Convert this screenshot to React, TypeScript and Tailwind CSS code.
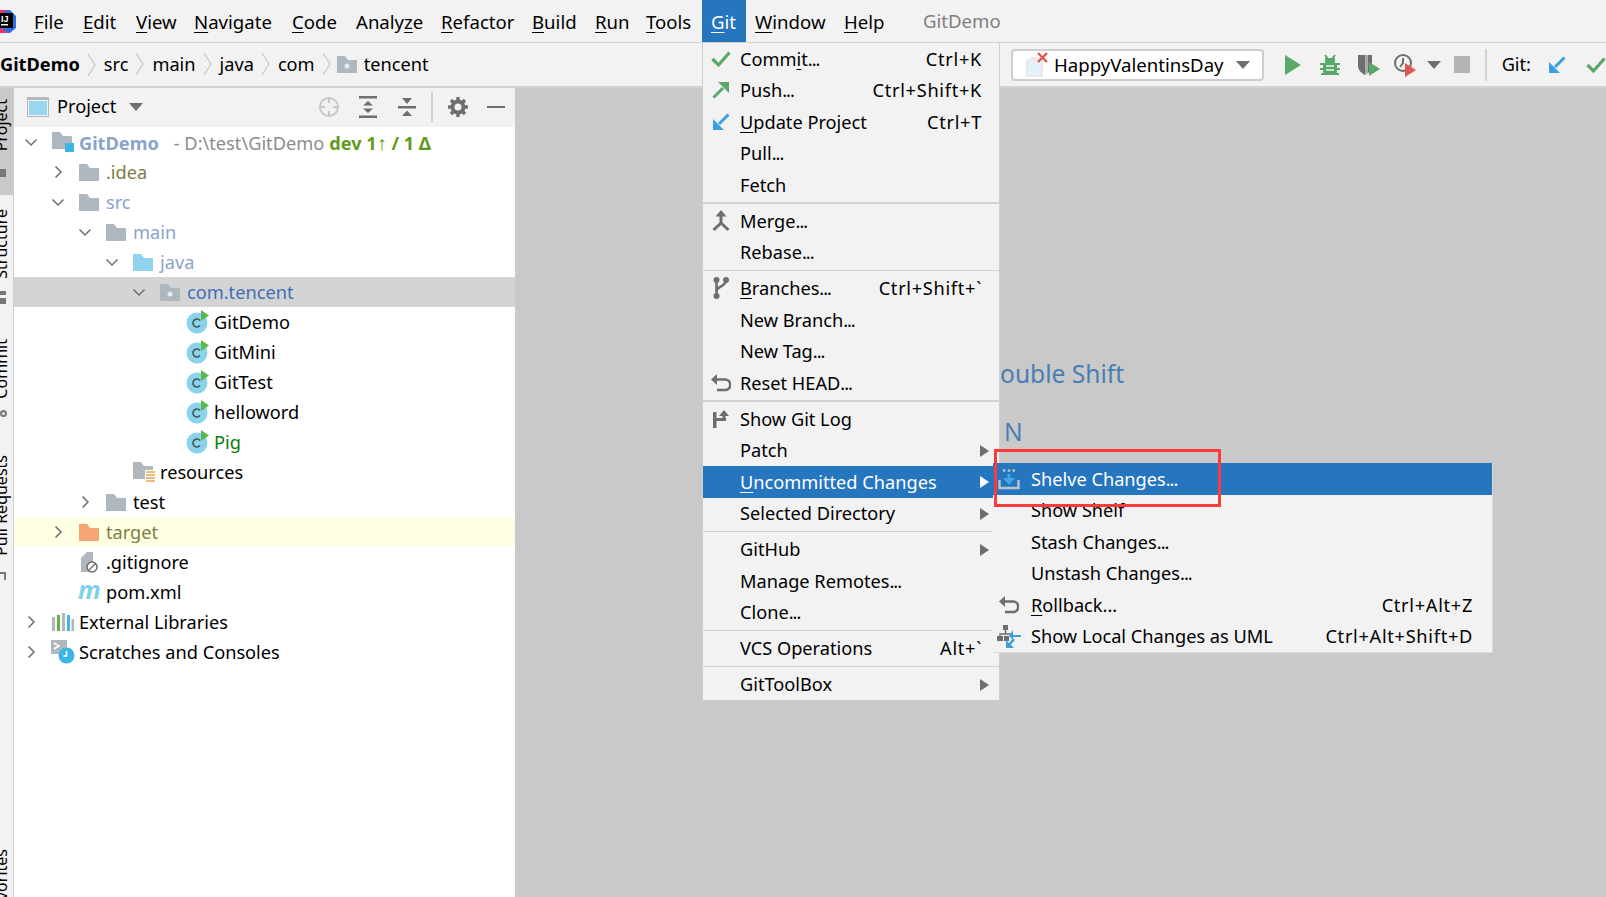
import type { ReactNode } from "react";

const U = ({ children }: { children: ReactNode }) => (
  <span className="underline decoration-[1px] underline-offset-[3px]">{children}</span>
);

const Dots = () => <span className="tracking-[-1px]">...</span>;

const Chevron = ({ open }: { open?: boolean }) => (
  <svg width="14" height="14" viewBox="0 0 14 14" fill="none" stroke="#6e6e6e" strokeWidth="1.5">
    {open ? <polyline points="1.5,4.5 7,10 12.5,4.5" /> : <polyline points="4.5,1.5 10,7 4.5,12.5" />}
  </svg>
);

const Folder = ({ color = "#afb8bf", dot }: { color?: string; dot?: boolean }) => (
  <svg width="22" height="20" viewBox="0 0 22 20">
    <path d="M1 2h8l3 4h9v13H1z" fill={color} />
    {dot && <circle cx="11" cy="12" r="2.5" fill="#e8eaec" />}
  </svg>
);

const ClassIcon = () => (
  <svg width="24" height="24" viewBox="0 0 24 24">
    <circle cx="11" cy="13" r="10.5" fill="#89d3ec" />
    <path d="M14 10.4a4 4 0 1 0 0 5.2" fill="none" stroke="#4a5357" strokeWidth="1.6" />
    <polygon points="15,0 23,5.5 15,11" fill="#59b84a" />
  </svg>
);

const ModuleIcon = () => (
  <svg width="24" height="22" viewBox="0 0 24 22">
    <path d="M1 1h8l3 4h9v13H1z" fill="#afb8bf" />
    <rect x="14" y="12" width="9" height="9" fill="#3fb5e5" />
  </svg>
);

const ResourcesIcon = () => (
  <svg width="24" height="22" viewBox="0 0 24 22">
    <path d="M1 1h8l3 4h9v13H1z" fill="#afb8bf" />
    <rect x="13" y="9" width="10" height="12" fill="#fff" />
    <path d="M14 11h9M14 14h9M14 17h9M14 20h9" stroke="#e2a850" strokeWidth="1.6" />
  </svg>
);

const IgnoreIcon = () => (
  <svg width="22" height="24" viewBox="0 0 22 24">
    <path d="M3 8l6-6h6v20H3z" fill="#afb8bf" />
    <circle cx="14" cy="17" r="5" fill="#fff" stroke="#6e6e6e" strokeWidth="1.5" />
    <path d="M10.5 20.5l7-7" stroke="#6e6e6e" strokeWidth="1.5" />
  </svg>
);

const PomIcon = () => (
  <svg width="24" height="20" viewBox="0 0 24 20">
    <text x="0" y="17" fontFamily="Noto Sans, sans-serif" fontWeight="700" fontStyle="italic" fontSize="25" fill="#7fd0ee">
      m
    </text>
  </svg>
);

const LibrariesIcon = () => (
  <svg width="24" height="20" viewBox="0 0 24 20">
    <rect x="1" y="5" width="3" height="14" fill="#afb8bf" />
    <rect x="6" y="3" width="3" height="16" fill="#62b543" />
    <rect x="11" y="1" width="3" height="18" fill="#afb8bf" />
    <rect x="16" y="3" width="3" height="16" fill="#40b6e0" />
    <rect x="20.5" y="7" width="2.5" height="12" fill="#afb8bf" />
  </svg>
);

const ScratchIcon = () => (
  <svg width="24" height="24" viewBox="0 0 24 24">
    <rect x="0" y="0" width="16" height="14" fill="#afb8bf" />
    <polyline points="3,3 8,6 3,9" fill="none" stroke="#fff" strokeWidth="1.5" />
    <circle cx="15.5" cy="15.5" r="8" fill="#3fb5e5" />
    <path d="M15.5 11v5h-3" fill="none" stroke="#fff" strokeWidth="1.6" />
  </svg>
);

const ProjectIcon = () => (
  <svg width="22" height="20" viewBox="0 0 22 20">
    <rect x="0.5" y="0.5" width="21" height="19" fill="#f2f2f2" stroke="#b4b9bd" />
    <rect x="2" y="4" width="18" height="14" fill="#97d8f0" />
    <rect x="0" y="0" width="22" height="3" fill="#b4b9bd" />
  </svg>
);

const Caret = ({ color = "#6e6e6e" }: { color?: string }) => (
  <svg width="14" height="8" viewBox="0 0 14 8">
    <polygon points="0,0 14,0 7,8" fill={color} />
  </svg>
);

const Tri = ({ white }: { white?: boolean }) => (
  <svg width="9" height="12" viewBox="0 0 9 12">
    <polygon points="0,0 9,6 0,12" fill={white ? "#fff" : "#6e6e6e"} />
  </svg>
);

const Check = () => (
  <svg width="20" height="18" viewBox="0 0 20 18" fill="none" stroke="#59a869" strokeWidth="3.2">
    <polyline points="1.5,9 7.5,15 18.5,2.5" />
  </svg>
);
const PushArrow = () => (
  <svg width="18" height="18" viewBox="0 0 18 18">
    <path d="M1.5 16.5L11 7" stroke="#59a869" strokeWidth="3" />
    <polygon points="6,1 17,1 17,12" fill="#59a869" />
  </svg>
);
const UpdateArrow = ({ size = 18 }: { size?: number }) => (
  <svg width={size} height={size} viewBox="0 0 18 18">
    <path d="M16.5 1.5L7 11" stroke="#3d9fdf" strokeWidth="3" />
    <polygon points="1,6 1,17 12,17" fill="#3d9fdf" />
  </svg>
);
const Merge = () => (
  <svg width="18" height="22" viewBox="0 0 18 22">
    <polygon points="9,0 14.5,6.5 3.5,6.5" fill="#6e6e6e" />
    <path d="M9 5v8L1.5 20M9 13l7.5 7" fill="none" stroke="#6e6e6e" strokeWidth="3" />
  </svg>
);
const Branch = () => (
  <svg width="16" height="22" viewBox="0 0 16 22" fill="#6e6e6e">
    <path d="M3.5 3v16M13 3c0 7-9.5 6-9.5 11" fill="none" stroke="#6e6e6e" strokeWidth="2.6" />
    <circle cx="3.5" cy="3" r="3" />
    <circle cx="3.5" cy="19" r="3" />
    <circle cx="13" cy="3" r="3" />
  </svg>
);
const Undo = () => (
  <svg width="20" height="18" viewBox="0 0 20 18">
    <path d="M5 5.5h9a5 5 0 0 1 0 10.5H6" fill="none" stroke="#6e6e6e" strokeWidth="2.6" />
    <polygon points="6,0 0,5.5 6,11" fill="#6e6e6e" />
  </svg>
);
const GitLog = () => (
  <svg width="16" height="18" viewBox="0 0 16 18" fill="#6e6e6e">
    <rect x="0" y="2" width="3.5" height="16" />
    <rect x="3" y="8" width="10" height="3" />
    <polygon points="11,0 16,6 6,6" />
    <rect x="9.5" y="5" width="3" height="4" />
  </svg>
);
const Shelve = () => (
  <svg width="22" height="22" viewBox="0 0 22 22">
    <path d="M1.5 12v8h19v-8" fill="none" stroke="#b8c4cc" strokeWidth="2.4" />
    <path d="M11 6v7" stroke="#3fa7e5" strokeWidth="3" />
    <polygon points="5,10 17,10 11,17" fill="#3fa7e5" />
    <path d="M5 2.5h12" stroke="#b8c4cc" strokeWidth="2.4" strokeDasharray="2.4 2.4" />
  </svg>
);
const Uml = () => (
  <svg width="24" height="24" viewBox="0 0 24 24">
    <rect x="6" y="1" width="5" height="5" fill="#6e6e6e" />
    <path d="M8.5 6v4M3 12v-2h11v2" fill="none" stroke="#6e6e6e" strokeWidth="1.5" />
    <rect x="0" y="12" width="6" height="5" fill="#6e6e6e" />
    <rect x="7" y="12" width="5" height="5" fill="#6e6e6e" />
    <polygon points="24,11 16,11 16,6 12,12 16,16 16,13 24,13" fill="#3d9fdf" />
    <path d="M17 15l-5 6" stroke="#3d9fdf" strokeWidth="2.6" />
    <polygon points="9,16 9,24 17,24" fill="#3d9fdf" />
  </svg>
);

const Logo = () => (
  <svg width="16" height="26" viewBox="0 0 16 26">
    <path d="M0 3h10l6 6v12l-6 5H0z" fill="#2f6fe0" />
    <path d="M0 3h6l-6 8z" fill="#f0336e" />
    <path d="M0 20l8 6H0z" fill="#f0336e" />
    <rect x="0" y="6" width="13" height="15" fill="#000" />
    <text x="1" y="15" fontFamily="Liberation Sans, sans-serif" fontWeight="700" fontSize="9" fill="#fff">
      IJ
    </text>
    <rect x="1" y="17" width="7" height="1.5" fill="#fff" />
  </svg>
);

const Locate = () => (
  <svg width="22" height="22" viewBox="0 0 22 22" fill="none" stroke="#c8c8c8" strokeWidth="2">
    <circle cx="11" cy="11" r="9" />
    <path d="M11 2v5M11 15v5M2 11h5M15 11h5" />
  </svg>
);
const ExpandAll = () => (
  <svg width="20" height="22" viewBox="0 0 20 22" fill="#6e6e6e">
    <rect x="1" y="0" width="18" height="2.5" />
    <rect x="1" y="19.5" width="18" height="2.5" />
    <polygon points="10,5 15,9.5 5,9.5" />
    <polygon points="10,17 15,12.5 5,12.5" />
  </svg>
);
const CollapseAll = () => (
  <svg width="20" height="22" viewBox="0 0 20 22" fill="#6e6e6e">
    <rect x="1" y="10" width="18" height="2.5" />
    <polygon points="10,8 15,2 5,2" />
    <polygon points="10,14.5 15,20 5,20" />
  </svg>
);
const Gear = () => (
  <svg width="20" height="20" viewBox="0 0 20 20">
    <circle cx="10" cy="10" r="5.5" fill="none" stroke="#6e6e6e" strokeWidth="4" />
    <path d="M10 0v4M10 16v4M0 10h4M16 10h4M3 3l3 3M14 14l3 3M17 3l-3 3M6 14l-3 3" stroke="#6e6e6e" strokeWidth="3.4" />
  </svg>
);

const ComboIcon = () => (
  <svg width="24" height="26" viewBox="0 0 24 26">
    <rect x="1" y="8" width="15" height="16" fill="#e4f2f9" stroke="#e3e3e3" strokeWidth="1.5" />
    <rect x="4" y="5" width="15" height="5" fill="#ececec" />
    <path d="M12 1l9 9M21 1l-9 9" stroke="#e05555" strokeWidth="2.4" />
  </svg>
);
const Play = () => (
  <svg width="16" height="20" viewBox="0 0 16 20">
    <polygon points="0,0 16,10 0,20" fill="#59a869" />
  </svg>
);
const Bug = () => (
  <svg width="20" height="22" viewBox="0 0 20 22" fill="#59a869">
    <path d="M5 1l3 4M15 1l-3 4" stroke="#59a869" strokeWidth="2" />
    <rect x="5" y="4" width="10" height="4" />
    <rect x="3" y="8" width="14" height="13" rx="4" />
    <path d="M0 10h20M0 15h20M1 20h18" stroke="#59a869" strokeWidth="1.8" />
    <path d="M6 12h8M6 16h8" stroke="#f2f2f2" strokeWidth="1.6" />
  </svg>
);
const Coverage = () => (
  <svg width="24" height="24" viewBox="0 0 24 24">
    <path d="M1 2h14v10c0 5-3 8-7 10C4 20 1 17 1 12z" fill="#6e6e6e" />
    <path d="M8 2h3v20l-3 0z" fill="#f2f2f2" opacity="0.45" />
    <polygon points="12,9 23,16 12,23" fill="#59a869" />
  </svg>
);
const Profiler = () => (
  <svg width="24" height="24" viewBox="0 0 24 24">
    <circle cx="10" cy="10" r="8" fill="none" stroke="#6e6e6e" strokeWidth="2" />
    <path d="M10 5v5l-3 4" fill="none" stroke="#6e6e6e" strokeWidth="2" />
    <polygon points="12,10 23,17 12,24" fill="#e05555" />
  </svg>
);

const menuBar = [
  { w: "w-[49px]", label: <><U>F</U>ile</> },
  { w: "w-[53px]", label: <><U>E</U>dit</> },
  { w: "w-[58px]", label: <><U>V</U>iew</> },
  { w: "w-[98px]", label: <><U>N</U>avigate</> },
  { w: "w-[64px]", label: <><U>C</U>ode</> },
  { w: "w-[85px]", label: <>Analy<U>z</U>e</> },
  { w: "w-[91px]", label: <><U>R</U>efactor</> },
  { w: "w-[63px]", label: <><U>B</U>uild</> },
  { w: "w-[51px]", label: <><U>R</U>un</> },
  { w: "w-[56px]", label: <><U>T</U>ools</> },
];

type MenuItem = { label: ReactNode; short?: string; icon?: ReactNode; arrow?: boolean; active?: boolean };

const gitMenu: { thick?: boolean; items: MenuItem[] }[] = [
  {
    items: [
      { label: <>Comm<U>i</U>t<Dots /></>, short: "Ctrl+K", icon: <Check /> },
      { label: <>Push<Dots /></>, short: "Ctrl+Shift+K", icon: <PushArrow /> },
      { label: <><U>U</U>pdate Project</>, short: "Ctrl+T", icon: <UpdateArrow /> },
      { label: <>Pull<Dots /></> },
      { label: "Fetch" },
    ],
  },
  { thick: true, items: [{ label: <>Merge<Dots /></>, icon: <Merge /> }, { label: <>Rebase<Dots /></> }] },
  {
    items: [
      { label: <><U>B</U>ranches<Dots /></>, short: "Ctrl+Shift+`", icon: <Branch /> },
      { label: <>New Branch<Dots /></> },
      { label: <>New Tag<Dots /></> },
      { label: <>Reset HEAD<Dots /></>, icon: <Undo /> },
    ],
  },
  {
    thick: true,
    items: [
      { label: "Show Git Log", icon: <GitLog /> },
      { label: "Patch", arrow: true },
      { label: <><U>U</U>ncommitted Changes</>, arrow: true, active: true },
      { label: "Selected Directory", arrow: true },
    ],
  },
  { items: [{ label: "GitHub", arrow: true }, { label: <>Manage Remotes<Dots /></> }, { label: <>Clone<Dots /></> }] },
  { items: [{ label: "VCS Operations", short: "Alt+`" }] },
  { items: [{ label: "GitToolBox", arrow: true }] },
];

const subMenu: MenuItem[] = [
  { label: <>Shelve Changes<Dots /></>, icon: <Shelve />, active: true },
  { label: "Show Shelf" },
  { label: <>Stash Changes<Dots /></> },
  { label: <>Unstash Changes<Dots /></> },
  { label: <><U>R</U>ollback...</>, short: "Ctrl+Alt+Z", icon: <Undo /> },
  { label: "Show Local Changes as UML", short: "Ctrl+Alt+Shift+D", icon: <Uml /> },
];

function MenuRow({ item, sub }: { item: MenuItem; sub?: boolean }) {
  return (
    <div
      className={`h-[31.5px] flex items-center relative text-[18.2px] pt-[1px] ${sub ? "pl-[38px] pr-[19px]" : "pl-[37px] pr-[17px]"} ${
        item.active ? "bg-[#2675bf] text-white" : ""
      }`}
    >
      {item.icon && (
        <span className={`absolute top-0 bottom-0 flex items-center justify-center w-[24px] ${sub ? "left-[4px]" : "left-[6px]"}`}>
          {item.icon}
        </span>
      )}
      <span>{item.label}</span>
      {item.short && <span className="ml-auto tracking-[0.7px]">{item.short}</span>}
      {item.arrow && (
        <span className="ml-auto -mr-[7px]">
          <Tri white={item.active} />
        </span>
      )}
    </div>
  );
}

type Row = {
  level: number;
  open?: boolean;
  icon: ReactNode;
  text: ReactNode;
  bg?: string;
  color?: string;
};

const tree: Row[] = [
  {
    level: 0,
    open: true,
    icon: <ModuleIcon />,
    text: (
      <>
        <span className="font-bold text-[#8aa3cc]">GitDemo</span>
        <span className="ml-[15px] text-[#8c8c8c]">- D:\test\GitDemo</span>
        <span className="ml-[5px] font-bold text-[#629a1d]">
          dev 1<span className="font-normal text-[20px]">↑</span> / 1 Δ
        </span>
      </>
    ),
  },
  { level: 1, open: false, icon: <Folder />, text: ".idea", color: "text-[#7d7d43]" },
  { level: 1, open: true, icon: <Folder />, text: "src", color: "text-[#8aa3cc]" },
  { level: 2, open: true, icon: <Folder />, text: "main", color: "text-[#8aa3cc]" },
  { level: 3, open: true, icon: <Folder color="#8fd3ef" />, text: "java", color: "text-[#8aa3cc]" },
  { level: 4, open: true, icon: <Folder dot />, text: "com.tencent", color: "text-[#3f6fb5]", bg: "bg-[#d4d4d4]" },
  { level: 5, icon: <ClassIcon />, text: "GitDemo" },
  { level: 5, icon: <ClassIcon />, text: "GitMini" },
  { level: 5, icon: <ClassIcon />, text: "GitTest" },
  { level: 5, icon: <ClassIcon />, text: "helloword" },
  { level: 5, icon: <ClassIcon />, text: "Pig", color: "text-[#0a7e0a]" },
  { level: 3, icon: <ResourcesIcon />, text: "resources" },
  { level: 2, open: false, icon: <Folder />, text: "test" },
  { level: 1, open: false, icon: <Folder color="#f5a672" />, text: "target", color: "text-[#7d7d43]", bg: "bg-[#ffffe4]" },
  { level: 1, icon: <IgnoreIcon />, text: ".gitignore" },
  { level: 1, icon: <PomIcon />, text: "pom.xml" },
  { level: 0, open: false, icon: <LibrariesIcon />, text: "External Libraries" },
  { level: 0, open: false, icon: <ScratchIcon />, text: "Scratches and Consoles" },
];

function TreeRow({ row }: { row: Row }) {
  return (
    <div
      className={`h-[30px] shrink-0 flex items-center text-[18.2px] ${row.bg ?? ""} ${row.color ?? ""}`}
      style={{ paddingLeft: 10 + row.level * 27 }}
    >
      <span className="w-[27px] flex justify-start shrink-0">
        {row.open !== undefined && <Chevron open={row.open} />}
      </span>
      <span className="w-[28px] shrink-0 flex items-center">{row.icon}</span>
      <span className="whitespace-pre pt-[2px]">{row.text}</span>
    </div>
  );
}

const VText = ({ children }: { children: string }) => (
  <span className="block shrink-0 w-[26px] -ml-[12px] leading-[26px] text-[16px] text-black whitespace-nowrap [writing-mode:vertical-rl] rotate-180">
    {children}
  </span>
);

const crumbs = ["src", "main", "java", "com"];

const Sep = () => (
  <svg width="10" height="24" viewBox="0 0 10 24" fill="none" stroke="#c6c6c6" strokeWidth="1.2">
    <polyline points="1,1 8,12 1,23" />
  </svg>
);

export default function App() {
  return (
    <div className="relative w-[1606px] h-[897px] overflow-hidden flex flex-col bg-[#f2f2f2] text-black text-[18.2px] font-['Noto_Sans','Liberation_Sans',sans-serif]">
      {/* menu bar */}
      <div className="h-[43px] shrink-0 flex items-center border-b border-[#d1d1d1] text-[18.6px]">
        <span className="w-[34px] flex items-center -mt-[2px]">
          <Logo />
        </span>
        {menuBar.map((m, i) => (
          <span key={i} className={`${m.w} pt-[1px]`}>
            {m.label}
          </span>
        ))}
        <span className="w-[44px] mr-[9px] h-full flex items-center pl-[9px] pt-[1px] bg-[#2675bf] text-white">
          <span>
            <U>G</U>it
          </span>
        </span>
        <span className="w-[89px] pt-[1px]">
          <U>W</U>indow
        </span>
        <span className="w-[79px] pt-[1px]">
          <U>H</U>elp
        </span>
        <span className="text-[#7f7f7f]">GitDemo</span>
      </div>

      {/* breadcrumb + run toolbar */}
      <div className="h-[43px] shrink-0 flex items-center">
        <span className="font-bold">GitDemo</span>
        <span className="mx-[7px]">
          <Sep />
        </span>
        {crumbs.map((c) => (
          <span key={c} className="flex items-center">
            <span>{c}</span>
            <span className="mx-[7px]">
              <Sep />
            </span>
          </span>
        ))}
        <span className="flex items-center gap-[6px] -ml-[3px]">
          <Folder dot />
          tencent
        </span>

        <div className="ml-auto w-[595px] flex items-center shrink-0">
          <div className="w-[256px] h-[32px] flex items-center bg-white border-2 border-[#cdcdcd] rounded-[4px] pl-[13px] pr-[12px]">
            <ComboIcon />
            <span className="ml-[4px] text-[18.6px]">HappyValentinsDay</span>
            <span className="ml-auto">
              <Caret />
            </span>
          </div>
          <span className="ml-[21px]">
            <Play />
          </span>
          <span className="ml-[19px]">
            <Bug />
          </span>
          <span className="ml-[17px]">
            <Coverage />
          </span>
          <span className="ml-[12px]">
            <Profiler />
          </span>
          <span className="ml-[10px]">
            <Caret />
          </span>
          <span className="ml-[13px] w-[16px] h-[17px] bg-[#b4b4b4]" />
          <span className="ml-[15px] w-[2px] h-[32px] bg-[#d2d2d2]" />
          <span className="ml-[15px]">Git:</span>
          <span className="ml-[17px]">
            <UpdateArrow />
          </span>
          <span className="ml-[20px]">
            <Check />
          </span>
        </div>
      </div>

      {/* workspace */}
      <div className="flex-1 min-h-0 flex border-t-2 border-[#d2d2d2]">
        <div className="w-[14px] shrink-0 border-r border-[#cfcfcf] overflow-hidden flex flex-col">
          <div className="h-[107px] shrink-0 bg-[#c9c9c9] pt-[11px] flex flex-col overflow-hidden">
            <VText>Project</VText>
            <span className="mt-[18px] shrink-0 w-[6px] h-[8px] bg-[#777]" />
          </div>
          <div className="mt-[14px] shrink-0 flex flex-col">
            <VText>Structure</VText>
            <span className="mt-[12px] w-[6px] h-[4px] bg-[#777]" />
            <span className="mt-[3px] w-[6px] h-[6px] bg-[#777]" />
          </div>
          <div className="mt-[35px] shrink-0 flex flex-col">
            <VText>Commit</VText>
            <span className="mt-[12px] w-[7px] h-[7px] rounded-full border-2 border-[#777]" />
          </div>
          <div className="mt-[38px] shrink-0 flex flex-col">
            <VText>Pull Requests</VText>
            <span className="mt-[16px] w-[6px] h-[8px] border-t-2 border-r-2 border-[#777]" />
          </div>
          <div className="mt-[269px] shrink-0 flex flex-col">
            <VText>Favorites</VText>
          </div>
        </div>

        <div className="w-[501px] shrink-0 bg-white flex flex-col">
          <div className="h-[39px] shrink-0 bg-[#f2f2f2] flex items-center pl-[13px] pb-[1px]">
            <ProjectIcon />
            <span className="ml-[8px]">Project</span>
            <span className="ml-[13px]">
              <Caret />
            </span>
            <span className="ml-auto">
              <Locate />
            </span>
            <span className="ml-[18px]">
              <ExpandAll />
            </span>
            <span className="ml-[19px]">
              <CollapseAll />
            </span>
            <span className="ml-[14px] w-[2px] h-[30px] bg-[#d2d2d2]" />
            <span className="ml-[15px]">
              <Gear />
            </span>
            <span className="ml-[19px] mr-[10px] w-[18px] h-[2.5px] bg-[#6e6e6e]" />
          </div>
          {tree.map((r, i) => (
            <TreeRow key={i} row={r} />
          ))}
        </div>

        <div className="flex-1 bg-[#c9c9c9] pl-[485px] pt-[269px] text-[24.6px] leading-[34px] text-[#4a7eb2]">
          <div>ouble Shift</div>
          <div className="mt-[24px] pl-[4px]">N</div>
        </div>
      </div>

      {/* git menu */}
      <div className="absolute left-[702px] top-[43px] w-[298px] bg-[#f2f2f2] border border-t-0 border-[#cfcfcf]">
        {gitMenu.map((g, i) => (
          <div key={i}>
            {i > 0 && (
              <div className="h-[4.5px] flex items-center">
                <div className={`w-full bg-[#d2d2d2] ${g.thick ? "h-[2px]" : "h-[1px]"}`} />
              </div>
            )}
            {g.items.map((it, j) => (
              <MenuRow key={j} item={it} />
            ))}
          </div>
        ))}
      </div>

      {/* uncommitted changes submenu */}
      <div className="absolute left-[993px] top-[463px] w-[500px] bg-[#f2f2f2] border-r border-b border-[#d9d9d9]">
        {subMenu.map((it, j) => (
          <MenuRow key={j} item={it} sub />
        ))}
      </div>

      {/* annotation */}
      <div className="absolute left-[994px] top-[449px] w-[227px] h-[58px] border-[3px] border-[#f93b3b]" />
    </div>
  );
}
